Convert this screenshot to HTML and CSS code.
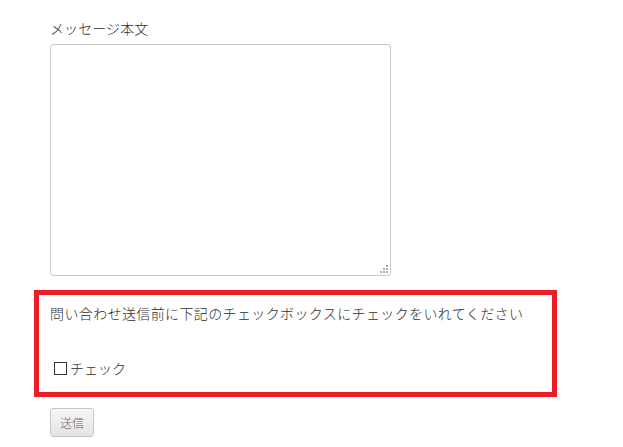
FILE: index.html
```html
<!DOCTYPE html>
<html lang="ja">
<head>
<meta charset="utf-8">
<link rel="stylesheet" href="styles.css">
</head>
<body>
<div class="page">
  <div class="field">
    <label class="label" for="msg">メッセージ本文</label>
    <div class="ta-wrap">
      <textarea id="msg" class="ta"></textarea>
      <svg class="grip" width="8" height="8" viewBox="0 0 8 8"><g fill="#b0b0b0"><rect x="6" y="0" width="2" height="2"/><rect x="3" y="3" width="2" height="2"/><rect x="6" y="3" width="2" height="2"/><rect x="0" y="6" width="2" height="2"/><rect x="3" y="6" width="2" height="2"/><rect x="6" y="6" width="2" height="2"/></g></svg>
    </div>
  </div>
  <div class="notice">
    <p class="notice-text">問い合わせ送信前に下記のチェックボックスにチェックをいれてください</p>
    <div class="check-row"><span class="box"></span><span>チェック</span></div>
  </div>
  <button class="submit" type="button">送信</button>
</div>
</body>
</html>
```
FILE: styles.css
```css
html, body { margin: 0; padding: 0; background: #fff; }
body {
  font-family: "Noto Sans CJK JP", "Noto Sans", sans-serif;
  font-weight: 300;
  color: #2e2e2e;
  font-size: 14px;
}
.page { padding: 18px 0 0 34px; }
.field { padding-left: 16px; }
.label { display: block; line-height: 20px; height: 20px; margin-bottom: 6px; font-size: 14px; letter-spacing: 0.1px; }
.ta-wrap { position: relative; width: 341px; height: 232px; }
.ta {
  display: block;
  box-sizing: border-box;
  width: 341px; height: 232px;
  border: 1px solid #c9c9c9;
  border-radius: 3px;
  resize: none;
  margin: 0; padding: 4px;
  background: #fff;
  outline: none;
}
.grip { position: absolute; right: 3px; bottom: 3px; }
.notice {
  box-sizing: border-box;
  width: 523px;
  margin-top: 14px;
  border: 5px solid #ed1c24;
  padding: 8px 11px 14px;
}
.notice-text { margin: 0; line-height: 20px; letter-spacing: 0.38px; }
.check-row { display: flex; align-items: center; margin-top: 35px; line-height: 20px; height: 20px; }
.box {
  display: inline-block;
  box-sizing: border-box;
  width: 13px; height: 13px;
  border: 1px solid #333;
  margin: 0 3px 0 4px;
}
.submit {
  display: block;
  margin: 11px 0 0 16px;
  box-sizing: border-box;
  width: 44px; height: 29px;
  padding: 0;
  border: 1px solid #c8c8c8;
  border-radius: 3px;
  background: linear-gradient(#f7f7f7, #e3e3e3);
  font-family: "Noto Sans CJK JP", sans-serif;
  font-weight: 300;
  font-size: 12px;
  color: #666;
}
```
